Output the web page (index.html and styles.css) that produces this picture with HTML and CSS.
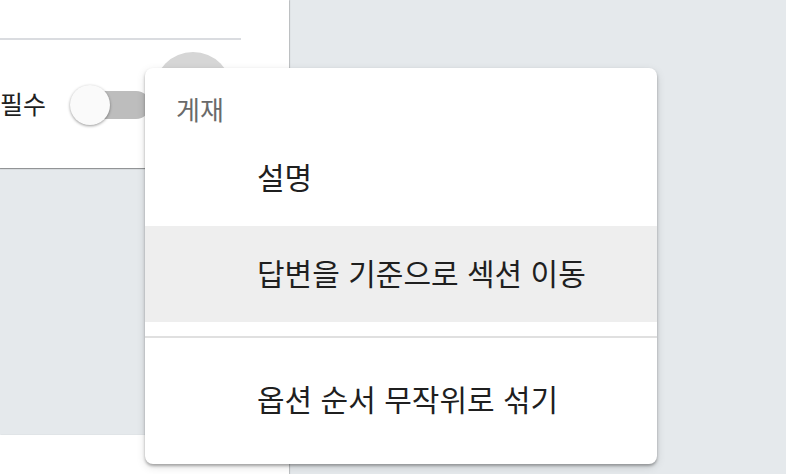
FILE: index.html
```html
<!DOCTYPE html>
<html lang="ko">
<head>
<meta charset="utf-8">
<title>메뉴</title>
<link rel="stylesheet" href="styles.css">
</head>
<body>
<div class="page">
  <div class="left-col">
    <section class="card card-top">
      <div class="card-divider"></div>
      <div class="req-row">
        <span class="req-label">필수</span>
        <span class="toggle"><span class="track"></span><span class="thumb"></span></span>
      </div>
      <span class="ripple"></span>
    </section>
    <section class="card card-bottom"></section>
  </div>
</div>
<div class="menu">
  <div class="menu-header">게재</div>
  <div class="menu-item">설명</div>
  <div class="menu-item is-hover">답변을 기준으로 섹션 이동</div>
  <div class="menu-sep"></div>
  <div class="menu-item">옵션 순서 무작위로 섞기</div>
</div>
</body>
</html>
```
FILE: styles.css
```css
html, body {
  margin: 0;
  padding: 0;
}
body {
  background: #e5e9ec;
  font-family: "Noto Sans CJK KR", "Noto Sans", sans-serif;
  color: #202124;
  width: 786px;
  height: 474px;
  overflow: hidden;
  position: relative;
}
.page {
  display: flex;
  height: 474px;
}
.left-col {
  width: 289px;
  display: flex;
  flex-direction: column;
  justify-content: space-between;
}
.card {
  background: #fff;
  box-shadow: 0 1px 1px rgba(0,0,0,0.35), 1px 0 1px rgba(0,0,0,0.12);
}
.card-top {
  position: relative;
  height: 168px;
  padding-top: 38px;
  box-sizing: border-box;
}
.card-divider {
  width: 241px;
  height: 2px;
  background: #dadce0;
}
.req-row {
  display: flex;
  align-items: center;
  margin-top: 45px;
  height: 40px;
}
.req-label {
  font-size: 25px;
  line-height: 40px;
  width: 70px;
  padding-bottom: 4px;
  color: #1f1f1f;
}
.toggle {
  position: relative;
  width: 80px;
  height: 40px;
}
.track {
  position: absolute;
  left: 8px;
  top: 6px;
  width: 72px;
  height: 28px;
  border-radius: 14px;
  background: #bdbdbd;
}
.thumb {
  position: absolute;
  left: 0;
  top: 0;
  width: 40px;
  height: 40px;
  border-radius: 50%;
  background: #fafafa;
  box-shadow: 0 1px 3px rgba(0,0,0,0.4);
}
.ripple {
  position: absolute;
  left: 154px;
  top: 52px;
  width: 78px;
  height: 78px;
  border-radius: 50%;
  background: #d6d6d6;
}
.card-bottom {
  height: 39px;
}
.menu {
  position: absolute;
  left: 145px;
  top: 68px;
  width: 512px;
  height: 396px;
  background: #fff;
  border-radius: 8px;
  box-shadow: 0 2px 3px rgba(0,0,0,0.3), 0 3px 10px rgba(0,0,0,0.12);
  box-sizing: border-box;
  padding-bottom: 16px;
  display: flex;
  flex-direction: column;
}
.menu-header {
  height: 62px;
  box-sizing: border-box;
  padding: 28px 0 0 31px;
  font-size: 26px;
  line-height: 26px;
  color: #6a6a6a;
}
.menu-item {
  height: 96px;
  box-sizing: border-box;
  padding-bottom: 4px;
  display: flex;
  align-items: center;
  padding-left: 112px;
  font-size: 30px;
  color: #1f1f1f;
}
.menu-item.is-hover {
  background: #eeeeee;
}
.menu-sep {
  height: 2px;
  background: #e0e0e0;
  margin: 14px 0;
}
```
